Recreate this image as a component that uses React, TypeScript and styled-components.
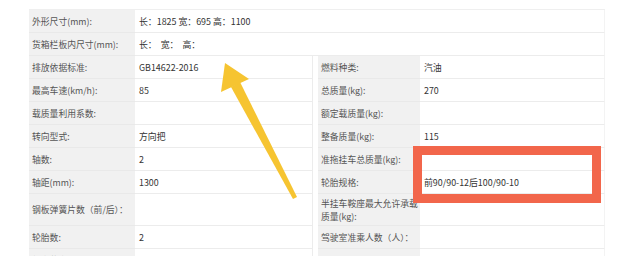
import React from "react";
import styled, { createGlobalStyle } from "styled-components";

const Global = createGlobalStyle`
  html, body { margin: 0; padding: 0; background: #fff; }
  body { font-family: "Microsoft YaHei", "Noto Sans CJK SC", "Noto Sans", sans-serif; }
`;

const Page = styled.div`
  position: relative;
  width: 630px;
  height: 256px;
  overflow: hidden;
  padding: 9px 0 0 29px;
  box-sizing: border-box;
`;

const Table = styled.div`
  display: grid;
  grid-template-columns: 106px 178px 5px 102px 185px;
  width: 576px;
  border-top: 1px solid #efefef;
`;

const Label = styled.div<{ $tall?: boolean }>`
  background: #f1f1f1;
  color: #555;
  font-size: 8.8px;
  line-height: 13px;
  height: ${(p) => (p.$tall ? 32 : 23)}px;
  box-sizing: border-box;
  padding: 0 1px 0 3px;
  display: flex;
  align-items: center;
  border-bottom: 1px solid #e9e9e9;
  white-space: ${(p) => (p.$tall ? "normal" : "nowrap")};
  overflow: hidden;
`;

const Value = styled.div<{ $span?: boolean; $tall?: boolean; $edge?: boolean }>`
  grid-column: ${(p) => (p.$span ? "2 / 6" : "auto")};
  color: #333;
  font-size: 8.9px;
  height: ${(p) => (p.$tall ? 32 : 23)}px;
  box-sizing: border-box;
  padding: 0 4px;
  display: flex;
  align-items: center;
  white-space: pre;
  border-bottom: 1px solid #ececec;
  border-right: 1px solid ${(p) => (p.$edge ? "#f3f3f3" : "#ececec")};
`;

const Gap = styled.div<{ $tall?: boolean }>`
  height: ${(p) => (p.$tall ? 32 : 23)}px;
  background: #fff;
`;

const Highlight = styled.div`
  position: absolute;
  left: 413px;
  top: 146px;
  width: 188px;
  height: 57px;
  box-sizing: border-box;
  border: 9px solid #f2664b;
`;

const ArrowSvg = styled.svg`
  position: absolute;
  left: 0;
  top: 0;
  pointer-events: none;
`;

type Row = { l1: string; v1?: string; l2?: string; v2?: string; span?: boolean; tall?: boolean };

const rows: Row[] = [
  { l1: "外形尺寸(mm):", v1: "长：1825 宽：695 高：1100", span: true },
  { l1: "货箱栏板内尺寸(mm):", v1: "长：  宽：  高：", span: true },
  { l1: "排放依据标准:", v1: "GB14622-2016", l2: "燃料种类:", v2: "汽油" },
  { l1: "最高车速(km/h):", v1: "85", l2: "总质量(kg):", v2: "270" },
  { l1: "载质量利用系数:", v1: "", l2: "额定载质量(kg):", v2: "" },
  { l1: "转向型式:", v1: "方向把", l2: "整备质量(kg):", v2: "115" },
  { l1: "轴数:", v1: "2", l2: "准拖挂车总质量(kg):", v2: "" },
  { l1: "轴距(mm):", v1: "1300", l2: "轮胎规格:", v2: "前90/90-12后100/90-10" },
  { l1: "钢板弹簧片数（前/后）：", v1: "", l2: "半挂车鞍座最大允许承载质量(kg):", v2: "", tall: true },
  { l1: "轮胎数:", v1: "2", l2: "驾驶室准乘人数（人）：", v2: "" },
  { l1: "额定载客（含驾驶员）", v1: "", l2: "", v2: "" },
];

export default function App() {
  return (
    <>
      <Global />
      <Page>
        <Table>
          {rows.map((r, i) =>
            r.span ? (
              <React.Fragment key={i}>
                <Label>{r.l1}</Label>
                <Value $span $edge>{r.v1}</Value>
              </React.Fragment>
            ) : (
              <React.Fragment key={i}>
                <Label $tall={r.tall}>{r.l1}</Label>
                <Value $tall={r.tall}>{r.v1}</Value>
                <Gap $tall={r.tall} />
                <Label $tall={r.tall}>{r.l2}</Label>
                <Value $tall={r.tall} $edge>{r.v2}</Value>
              </React.Fragment>
            )
          )}
        </Table>
        <Highlight />
        <ArrowSvg width="630" height="256" viewBox="0 0 630 256">
          <polygon points="231,87 240,82 297,197 293,199" fill="#f6c431" />
          <polygon points="225,63 221,92 249,79" fill="#f6c431" />
        </ArrowSvg>
      </Page>
    </>
  );
}
